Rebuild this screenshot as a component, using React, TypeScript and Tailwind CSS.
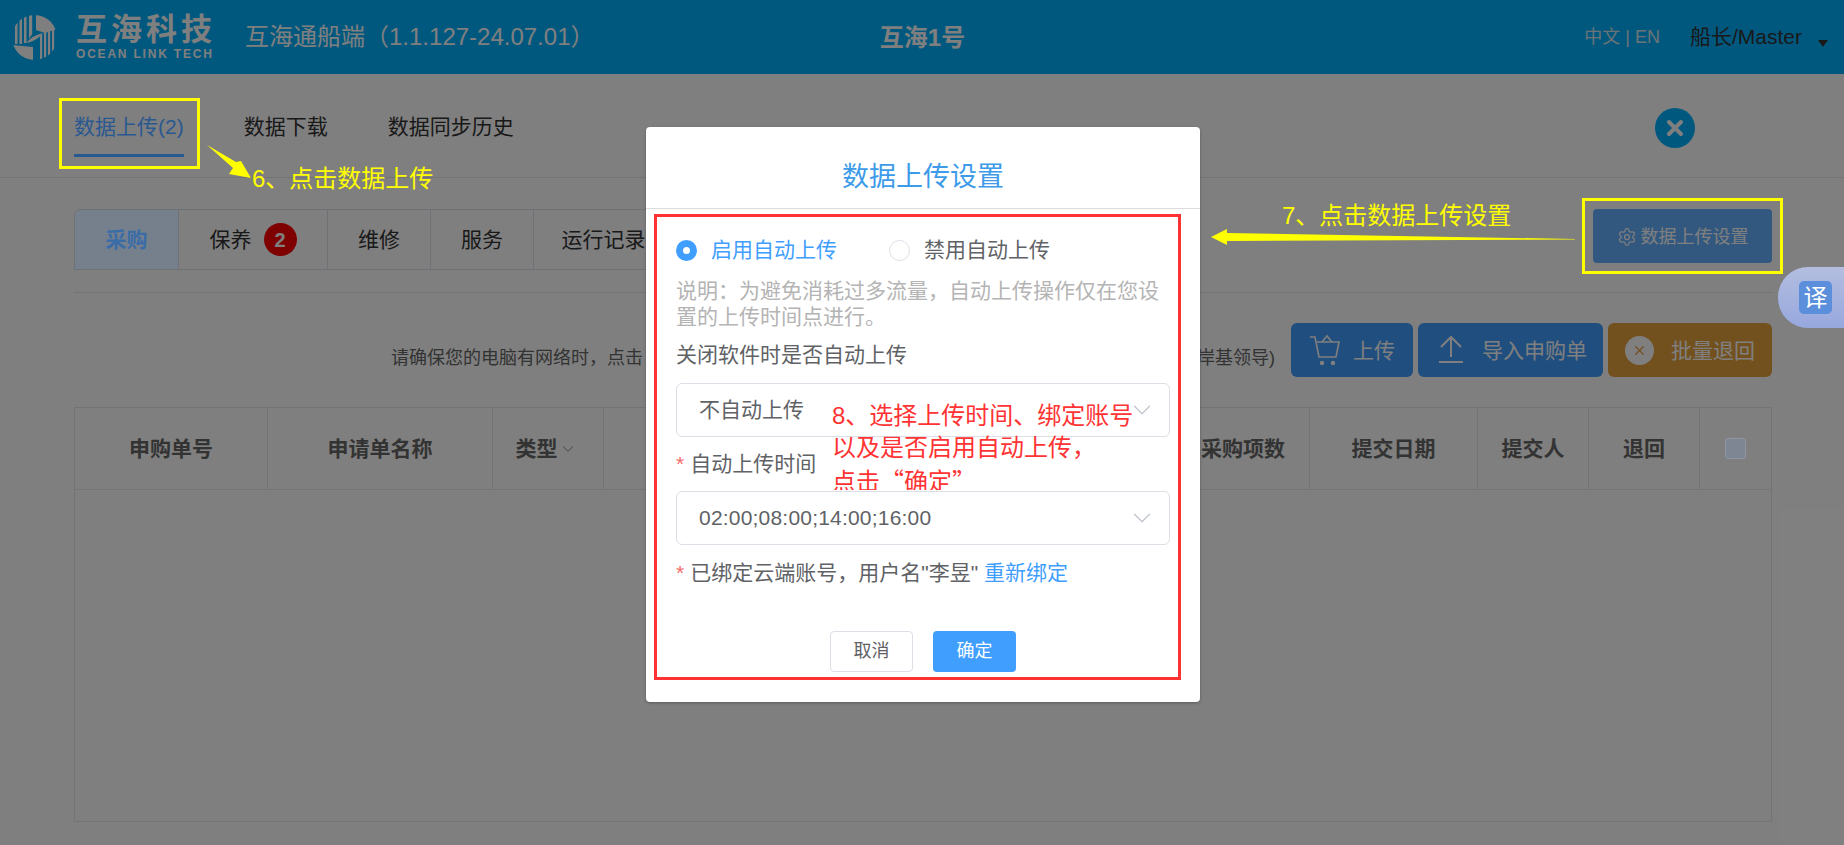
import React from 'react';
import { ChevronDown, Settings, X } from 'lucide-react';

const subTabs = [
  { label: '维修', width: 'w-[103px]' },
  { label: '服务', width: 'w-[103px]' },
  { label: '运行记录', width: 'w-[140px]' },
];

const columns = [
  { label: '申购单号', width: 'w-[193px]' },
  { label: '申请单名称', width: 'w-[225px]' },
  { label: '类型', width: 'w-[111px]', arrow: true },
  { label: '', width: 'w-[573px]' },
  { label: '采购项数', width: 'w-[133px]' },
  { label: '提交日期', width: 'w-[168px]' },
  { label: '提交人', width: 'w-[111px]' },
  { label: '退回', width: 'w-[111px]' },
];

function Logo() {
  return (
    <svg width="45" height="45" viewBox="0 0 45 45" className="shrink-0">
      <defs>
        <clipPath id="logoCircle">
          <circle cx="22.5" cy="22.5" r="22.5" />
        </clipPath>
      </defs>
      <g clipPath="url(#logoCircle)" fill="#fff">
        <rect x="3" y="0" width="2.5" height="29" />
        <rect x="7.5" y="0" width="2.5" height="29" />
        <rect x="12" y="0" width="2.5" height="28" />
        <path d="M17 0h3.2v19l-3.2 5z" />
        <path d="M24 0h21v14l-12 4-9-3z" />
        <path d="M0 30l21 2v13H0z" />
        <path d="M14 28q7-8 17-10q-6 8-17 10z" />
        <rect x="28" y="19" width="2.2" height="26" />
        <rect x="32" y="17" width="2.2" height="28" />
        <rect x="36" y="16" width="2.2" height="29" />
        <rect x="40" y="15" width="2.2" height="30" />
      </g>
    </svg>
  );
}

function Radio({ checked, label }: { checked?: boolean; label: string }) {
  return (
    <div className="flex items-center">
      {checked ? (
        <span className="flex h-[21px] w-[21px] items-center justify-center rounded-full bg-[#409eff]">
          <span className="h-[7px] w-[7px] rounded-full bg-white" />
        </span>
      ) : (
        <span className="h-[21px] w-[21px] rounded-full border border-[#dcdfe6] bg-white" />
      )}
      <span className={`ml-[14px] text-[21px] leading-[26px] ${checked ? 'text-[#409eff]' : 'text-[#606266]'}`}>
        {label}
      </span>
    </div>
  );
}

function SelectBox({ value, wide }: { value: string; wide?: boolean }) {
  return (
    <div className="flex h-[54px] items-center justify-between rounded-[6px] border border-[#dcdfe6] pl-[22px] pr-[12px]">
      <span className={`text-[21px] leading-[26px] text-[#606266] ${wide ? 'tracking-[0.2px]' : ''}`}>{value}</span>
      <ChevronDown size={30} strokeWidth={1} className="text-[#c0c4cc]" />
    </div>
  );
}

export default function App() {
  return (
    <div
      className="relative h-[845px] w-[1844px] overflow-hidden bg-white"
      style={{ fontFamily: '"Liberation Sans", "Noto Sans CJK SC", sans-serif' }}
    >
      {/* 헤더 */}
      <header className="grid h-[74px] grid-cols-[1fr_auto_1fr] items-center bg-[#00b0fe] pl-[12px] pr-[16px] text-white">
        <div className="flex items-center">
          <Logo />
          <div className="ml-[19px] flex w-[136px] flex-col">
            <span className="whitespace-nowrap text-[31px] font-bold leading-[32px] tracking-[4px]">互海科技</span>
            <span className="mt-[2px] whitespace-nowrap text-[12px] font-bold leading-[12px] tracking-[1.8px]">OCEAN LINK TECH</span>
          </div>
          <span className="ml-[33px] text-[24px] leading-[30px]">互海通船端（1.1.127-24.07.01）</span>
        </div>
        <span className="ml-[5px] pt-[1px] text-[24px] font-bold leading-[30px]">互海1号</span>
        <div className="flex items-center justify-end">
          <span className="text-[18px] leading-[24px] text-[#d8e6ee]">中文 | EN</span>
          <span className="ml-[30px] text-[21px] leading-[26px] text-[#333]">船长/Master</span>
          <span className="ml-[16px] mt-[12px] h-0 w-0 border-x-[5px] border-t-[7px] border-x-transparent border-t-[#333]" />
        </div>
      </header>

      {/* 상단 탭 */}
      <nav className="flex h-[104px] items-start gap-[60px] border-b border-[#e8e8e8] pl-[74px] pt-[40px]">
        <div className="relative z-10 flex flex-col">
          <span className="text-[21px] leading-[26px] text-[#2a5890]">数据上传(2)</span>
          <span className="mt-[14px] h-[3px] bg-[#265a90]" />
        </div>
        <span className="text-[21px] leading-[26px] text-[#333]">数据下载</span>
        <span className="text-[21px] leading-[26px] text-[#333]">数据同步历史</span>
      </nav>
      <button className="absolute left-[1655px] top-[108px] flex h-[40px] w-[40px] items-center justify-center rounded-full bg-[#00b0fe] text-white">
        <X size={24} strokeWidth={4} />
      </button>

      <main className="pl-[74px] pr-[72px]">
        {/* 하위 탭 */}
        <div className="flex items-start justify-between pt-[31px]">
          <div className="flex h-[61px] rounded-t-[6px] border border-[#dce3ec] text-[21px] text-[#333]">
            <div className="relative z-10 flex w-[103px] items-center justify-center rounded-tl-[6px] bg-[#75808c] font-bold text-[#3a6ca8]">采购</div>
            <div className="flex w-[149px] items-center justify-center border-l border-[#dce3ec]">
              保养
              <span className="ml-[12px] flex h-[33px] w-[33px] items-center justify-center rounded-full bg-[#ff0000] text-[20px] font-bold text-white">2</span>
            </div>
            {subTabs.map((tab) => (
              <div key={tab.label} className={`flex ${tab.width} items-center justify-center border-l border-[#dce3ec]`}>
                {tab.label}
              </div>
            ))}
          </div>
          <button className="flex h-[54px] w-[179px] items-center justify-center rounded-[4px] bg-[#66b1ff] pt-[2px] text-[18px] text-white">
            <Settings size={20} strokeWidth={1.5} className="mr-[4px]" />
            数据上传设置
          </button>
        </div>

        <div className="mt-[22px] border-t border-[#e8e8e8]" />

        {/* 안내문/버튼 */}
        <div className="mt-[30px] flex h-[54px] items-center justify-end">
          <div className="mr-[16px] mt-[16px] flex w-[884px] justify-between text-[18px] leading-[24px] text-[#666]">
            <span>请确保您的电脑有网络时，点击</span>
            <span>岸基领导)</span>
          </div>
          <div className="flex gap-[5px]">
            <button className="flex h-[54px] w-[122px] items-center rounded-[6px] bg-[#409eff] pl-[18px] text-[21px] text-white">
              <svg width="32" height="32" viewBox="0 0 32 32" fill="none" stroke="currentColor" strokeWidth="1.6" className="mr-[12px]">
                <path d="M1 3h5l4 20h17l3-15H8" />
                <path d="M13 8l5-6 5 6" />
                <circle cx="13" cy="29" r="1.4" fill="currentColor" />
                <circle cx="24" cy="29" r="1.4" fill="currentColor" />
              </svg>
              <span className="pt-[2px]">上传</span>
            </button>
            <button className="flex h-[54px] w-[185px] items-center rounded-[6px] bg-[#409eff] pl-[20px] text-[21px] text-white">
              <svg width="26" height="30" viewBox="0 0 26 30" fill="none" stroke="currentColor" strokeWidth="2" className="mr-[18px]">
                <path d="M13 22V3M3 12l10-10 10 10M1 27h24" />
              </svg>
              <span className="pt-[2px]">导入申购单</span>
            </button>
            <button className="flex h-[54px] w-[164px] items-center rounded-[6px] bg-[#e6a23c] pl-[17px] text-[21px] text-white">
              <span className="mr-[17px] flex h-[29px] w-[29px] items-center justify-center rounded-full bg-white text-[#e6a23c]">
                <X size={15} strokeWidth={2} />
              </span>
              <span className="pt-[2px]">批量退回</span>
            </button>
          </div>
        </div>

        {/* 테이블 */}
        <div className="mt-[30px] h-[415px] border border-[#e8e8e8]">
          <div className="flex h-[82px] border-b border-[#e8e8e8]">
            {columns.map((col, i) => (
              <div
                key={i}
                className={`flex ${col.width} items-center justify-center border-r border-[#e8e8e8] text-[21px] font-bold text-[#666]`}
              >
                {col.label}
                {col.arrow && <ChevronDown size={18} strokeWidth={1} className="ml-[1px] mr-[4px]" />}
              </div>
            ))}
            <div className="flex flex-1 items-center justify-center">
              <span className="relative z-10 h-[21px] w-[21px] rounded-[3px] border border-[#8f96a3] bg-[#7e8694]" />
            </div>
          </div>
        </div>
      </main>

      {/* 모달 배경 */}
      <div className="absolute inset-0 bg-black/50" />

      {/* 번역 버튼 */}
      <div className="absolute left-[1778px] top-[267px] flex h-[61px] w-[66px] items-center rounded-l-[30px] bg-gradient-to-b from-[#b3bddf] to-[#97a8de] pl-[21px]">
        <span className="flex h-[33px] w-[33px] items-center justify-center rounded-[5px] bg-[#5b8fdc] text-[24px] leading-none text-white">译</span>
      </div>

      {/* 설정 모달 */}
      <div className="absolute left-[646px] top-[127px] flex h-[575px] w-[554px] flex-col rounded-[4px] bg-white shadow-[0_1px_3px_rgba(0,0,0,0.3)]">
        <div className="flex h-[82px] items-center justify-center border-b border-[#ddd] pt-[18px] text-[27px] leading-[34px] text-[#3d9be9]">
          数据上传设置
        </div>
        <div className="flex flex-1 flex-col px-[30px] pt-[28px]">
          <div className="flex gap-[52px]">
            <Radio checked label="启用自动上传" />
            <Radio label="禁用自动上传" />
          </div>
          <p className="mt-[15px] text-[21px] leading-[26px] text-[#b4b4b4]">
            说明：为避免消耗过多流量，自动上传操作仅在您设置的上传时间点进行。
          </p>
          <p className="mt-[12px] text-[21px] leading-[26px] text-[#606266]">关闭软件时是否自动上传</p>
          <div className="mt-[15px]">
            <SelectBox value="不自动上传" />
          </div>
          <p className="mt-[14px] text-[21px] leading-[26px] text-[#606266]">
            <span className="mr-[6px] text-[#f56c6c]">*</span>自动上传时间
          </p>
          <div className="mt-[14px]">
            <SelectBox value="02:00;08:00;14:00;16:00" wide />
          </div>
          <p className="mt-[15px] text-[21px] leading-[26px] text-[#606266]">
            <span className="mr-[6px] text-[#f56c6c]">*</span>已绑定云端账号，用户名"李昱"{' '}
            <span className="text-[#409eff]">重新绑定</span>
          </p>
          <div className="mt-[45px] flex justify-center gap-[20px]">
            <button className="h-[41px] w-[83px] rounded-[4px] border border-[#dcdfe6] bg-white text-[18px] text-[#606266]">取消</button>
            <button className="h-[41px] w-[83px] rounded-[4px] bg-[#409eff] text-[18px] text-white">确定</button>
          </div>
        </div>
      </div>

      {/* 주석 */}
      <div className="absolute left-[59px] top-[98px] h-[71px] w-[141px] border-[3px] border-[#ffff00]" />
      <svg className="absolute left-[205px] top-[143px]" width="50" height="40">
        <polygon points="2,2 31,19 36,18 46,35 24,31 28,25" fill="#ffff00" />
      </svg>
      <span className="absolute left-[252px] top-[164px] text-[24px] leading-[30px] text-[#ffff00]">6、点击数据上传</span>

      <div className="absolute left-[1582px] top-[198px] h-[76px] w-[201px] border-[3px] border-[#ffff00]" />
      <span className="absolute left-[1282px] top-[201px] text-[24px] leading-[30px] text-[#ffff00]">7、点击数据上传设置</span>
      <svg className="absolute left-[1210px] top-[228px]" width="366" height="18">
        <polygon points="365,11 17,5 17,1 1,9 17,17 17,13 365,11.6" fill="#ffff00" />
      </svg>

      <div className="absolute left-[654px] top-[214px] h-[466px] w-[527px] border-[3px] border-[#ff3333]" />
      <div className="absolute left-[832px] top-[400px] h-[90px] overflow-hidden text-[24px] leading-[32px] text-[#ff3333]">
        <p>8、选择上传时间、绑定账号</p>
        <p>以及是否启用自动上传，</p>
        <p>
          点击<span className="font-['Noto_Sans_CJK_SC']">“确定”</span>
        </p>
      </div>
    </div>
  );
}
